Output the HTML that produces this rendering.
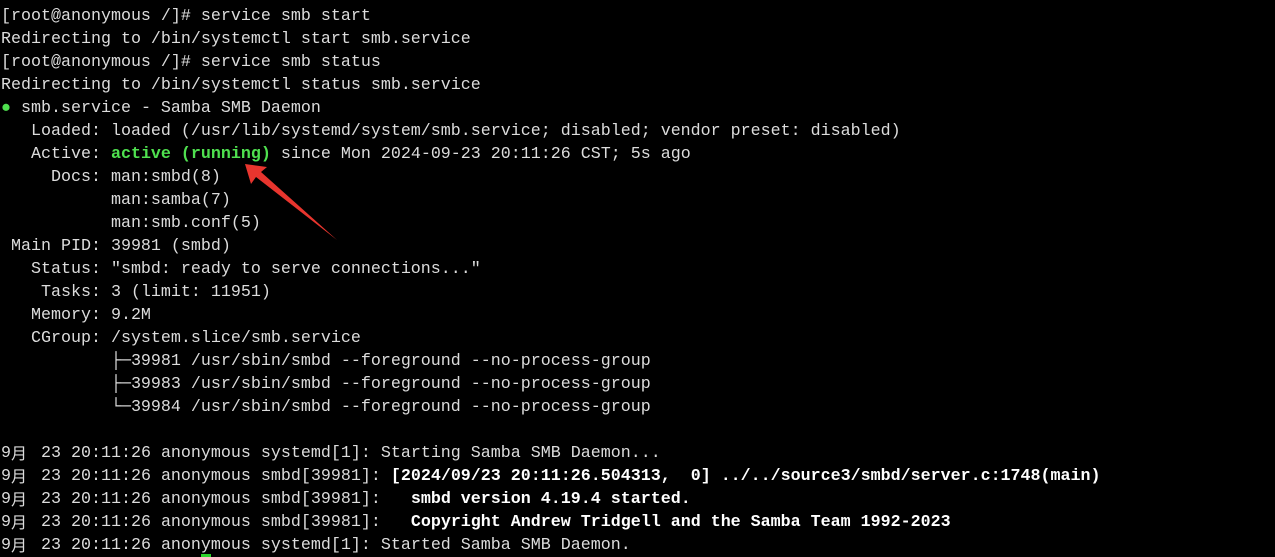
<!DOCTYPE html>
<html><head><meta charset="utf-8"><style>
html,body{margin:0;padding:0;background:#000;width:1275px;height:557px;overflow:hidden}
.t{position:absolute;left:1px;top:5px;font-family:"Liberation Mono",monospace;font-size:16.67px;color:#dcdcdc}
.t div{height:23px;line-height:23px;white-space:pre}
.g{color:#4fe04f;font-weight:bold}
.b{color:#fff;font-weight:bold}
.dot{color:#4fe04f}
.cj{display:inline-block;width:20px;height:23px;line-height:20px;vertical-align:top;font-family:"Noto Sans CJK SC",sans-serif;font-size:16px;overflow:hidden}
</style></head><body>
<div class="t">
<div>[root@anonymous /]# service smb start</div>
<div>Redirecting to /bin/systemctl start smb.service</div>
<div>[root@anonymous /]# service smb status</div>
<div>Redirecting to /bin/systemctl status smb.service</div>
<div><span class="dot">●</span> smb.service - Samba SMB Daemon</div>
<div>   Loaded: loaded (/usr/lib/systemd/system/smb.service; disabled; vendor preset: disabled)</div>
<div>   Active: <span class="g">active (running)</span> since Mon 2024-09-23 20:11:26 CST; 5s ago</div>
<div>     Docs: man:smbd(8)</div>
<div>           man:samba(7)</div>
<div>           man:smb.conf(5)</div>
<div> Main PID: 39981 (smbd)</div>
<div>   Status: "smbd: ready to serve connections..."</div>
<div>    Tasks: 3 (limit: 11951)</div>
<div>   Memory: 9.2M</div>
<div>   CGroup: /system.slice/smb.service</div>
<div>           ├─39981 /usr/sbin/smbd --foreground --no-process-group</div>
<div>           ├─39983 /usr/sbin/smbd --foreground --no-process-group</div>
<div>           └─39984 /usr/sbin/smbd --foreground --no-process-group</div>
<div> </div>
<div>9<span class="cj">月</span> 23 20:11:26 anonymous systemd[1]: Starting Samba SMB Daemon...</div>
<div>9<span class="cj">月</span> 23 20:11:26 anonymous smbd[39981]: <span class="b">[2024/09/23 20:11:26.504313,  0] ../../source3/smbd/server.c:1748(main)</span></div>
<div>9<span class="cj">月</span> 23 20:11:26 anonymous smbd[39981]: <span class="b">  smbd version 4.19.4 started.</span></div>
<div>9<span class="cj">月</span> 23 20:11:26 anonymous smbd[39981]: <span class="b">  Copyright Andrew Tridgell and the Samba Team 1992-2023</span></div>
<div>9<span class="cj">月</span> 23 20:11:26 anonymous systemd[1]: Started Samba SMB Daemon.</div>
</div>
<div style="position:absolute;left:201px;top:554px;width:10px;height:3px;background:#2bd42b"></div>
<svg style="position:absolute;left:0;top:0" width="1275" height="557">
<polygon points="245,164 267,167 261,172 337,240 256,177 251,184" fill="#e8352e"/>
</svg>
</body></html>
